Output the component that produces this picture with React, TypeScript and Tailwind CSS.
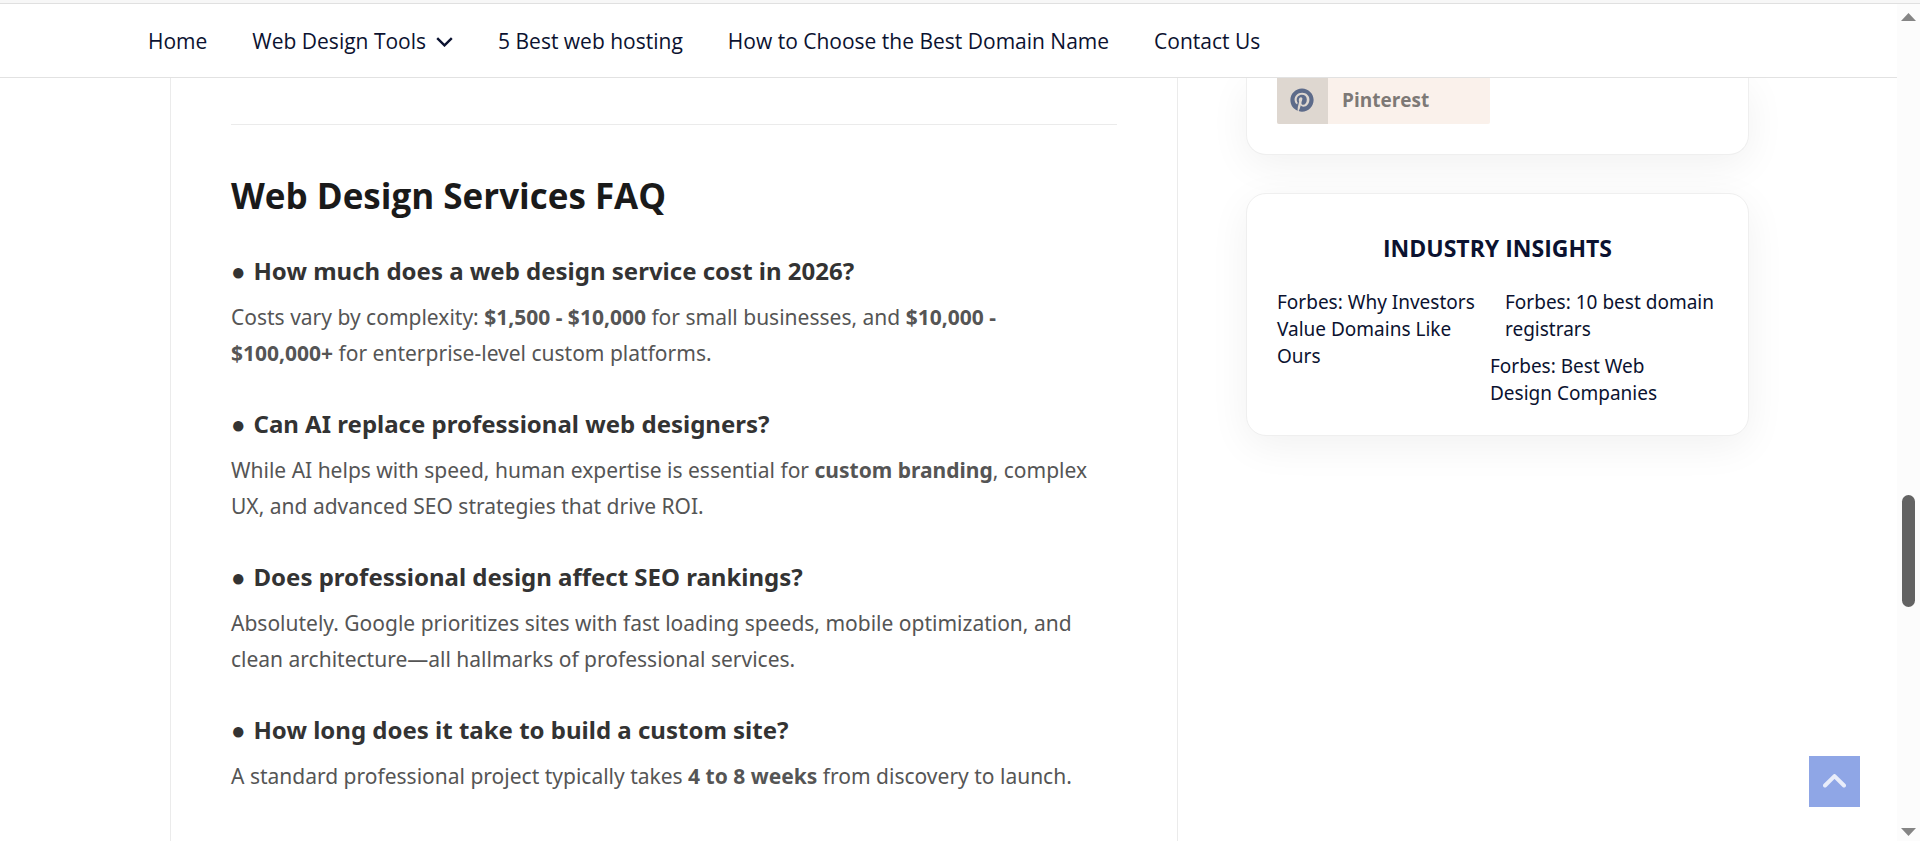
import React from 'react';
import { FaPinterest } from 'react-icons/fa';

interface FaqItem {
  question: string;
  answer: React.ReactNode;
}

const navLinks = [
  { label: 'Home' },
  { label: 'Web Design Tools', hasMenu: true },
  { label: '5 Best web hosting' },
  { label: 'How to Choose the Best Domain Name' },
  { label: 'Contact Us' },
];

const faqItems: FaqItem[] = [
  {
    question: 'How much does a web design service cost in 2026?',
    answer: (
      <>
        Costs vary by complexity: <strong>$1,500 - $10,000</strong> for small businesses, and{' '}
        <strong>
          $10,000 -<br />
          $100,000+
        </strong>{' '}
        for enterprise-level custom platforms.
      </>
    ),
  },
  {
    question: 'Can AI replace professional web designers?',
    answer: (
      <>
        While AI helps with speed, human expertise is essential for{' '}
        <strong>custom branding</strong>, complex
        <br />
        UX, and advanced SEO strategies that drive ROI.
      </>
    ),
  },
  {
    question: 'Does professional design affect SEO rankings?',
    answer: (
      <>
        Absolutely. Google prioritizes sites with fast loading speeds, mobile optimization, and
        <br />
        clean architecture—all hallmarks of professional services.
      </>
    ),
  },
  {
    question: 'How long does it take to build a custom site?',
    answer: (
      <>
        A standard professional project typically takes <strong>4 to 8 weeks</strong> from
        discovery to launch.
      </>
    ),
  },
];

function Header() {
  return (
    <header className="border-b border-[#e2e2e2] bg-white">
      <nav className="mx-auto flex h-[73px] max-w-[1601px] items-center gap-[45px] pt-[2px] text-[21px] text-[#0b1230]">
        {navLinks.map((link) => (
          <a key={link.label} href="#" className="flex items-center gap-[10px] whitespace-nowrap">
            {link.label}
            {link.hasMenu && (
              <svg width="17" height="10" viewBox="0 0 17 10" fill="none" aria-hidden="true">
                <path d="M1.2 1.2 8.5 8.4l7.3-7.2" stroke="currentColor" strokeWidth="2.4" />
              </svg>
            )}
          </a>
        ))}
      </nav>
    </header>
  );
}

function Faq() {
  return (
    <article className="ml-[22px] min-w-0 flex-1 border-x border-[#ebebeb] px-[60px] pt-[46px]">
      <hr className="border-[#ebebeb]" />
      <h2 className="mt-[46px] text-[35px] leading-[50px] font-bold text-[#1a1a1a]">
        Web Design Services FAQ
      </h2>
      <div className="mt-[32px] flex flex-col gap-[35px] font-['Noto_Sans',sans-serif]">
        {faqItems.map((item) => (
          <section key={item.question}>
            <h3 className="flex gap-[8px] text-[24px] leading-[36px] font-bold text-[#333333]">
              <span>●</span>
              {item.question}
            </h3>
            <p className="mt-[10px] text-[21px] leading-[36px] text-[#555555]">{item.answer}</p>
          </section>
        ))}
      </div>
    </article>
  );
}

function Sidebar() {
  return (
    <aside className="flex w-[503px] shrink-0 flex-col gap-[38px]">
      <div className="rounded-b-[20px] border border-t-0 border-[#efefef] bg-white px-[30px] pb-[30px] shadow-[0_10px_40px_rgba(0,0,0,0.06)]">
        <a href="#" className="flex h-[46px] w-[213px] items-stretch overflow-hidden rounded-b-[2px] bg-[#faf1eb]">
          <span className="flex w-[51px] items-center bg-[#ded7d0] pb-[2px] pl-[13px] text-[#5d6b8a]">
            <FaPinterest size={24} />
          </span>
          <span className="flex items-center pb-[2px] pl-[14px] text-[19px] font-bold text-[#7d7976]">
            Pinterest
          </span>
        </a>
      </div>

      <div className="rounded-[20px] border border-[#efefef] bg-white px-[30px] pt-[36px] pb-[28px] text-[#0b1230] shadow-[0_10px_40px_rgba(0,0,0,0.06)]">
        <h2 className="text-center text-[23px] leading-[36px] font-bold">INDUSTRY INSIGHTS</h2>
        <div className="mt-[23px] flex font-['Noto_Sans',sans-serif] text-[19px] leading-[27px]">
          <a href="#" className="w-[213px] shrink-0">
            Forbes: Why Investors Value Domains Like Ours
          </a>
          <div className="flex flex-col gap-[10px]">
            <a href="#" className="pl-[15px]">
              Forbes: 10 best domain registrars
            </a>
            <a href="#" className="w-[180px]">
              Forbes: Best Web Design Companies
            </a>
          </div>
        </div>
      </div>
    </aside>
  );
}

function ScrollTrack() {
  return (
    <div className="flex w-[23px] shrink-0 flex-col items-center bg-[#fcfcfc] pt-[9px] pb-[5px]" aria-hidden="true">
      <svg width="15" height="8" viewBox="0 0 15 8">
        <path d="M7.5 0 15 8H0z" fill="#858585" />
      </svg>
      <div className="grow-[474]" />
      <div className="h-[112px] w-[13px] rounded-full bg-[#636363]" />
      <div className="grow-[221]" />
      <svg width="15" height="8" viewBox="0 0 15 8">
        <path d="M0 0h15L7.5 8z" fill="#858585" />
      </svg>
    </div>
  );
}

export default function App() {
  return (
    <div className="flex min-h-screen flex-col bg-white font-['Open_Sans',sans-serif]">
      <div className="h-[4px] border-b border-[#e0e0e0] bg-[#f7f7f7]" />
      <div className="flex flex-1">
        <div className="flex min-w-0 flex-1 flex-col">
          <Header />
          <main className="flex flex-1 overflow-hidden">
            <div className="mx-auto flex w-full max-w-[1601px] gap-[68px]">
              <Faq />
              <Sidebar />
            </div>
          </main>
        </div>
        <ScrollTrack />
      </div>

      <button
        type="button"
        aria-label="Scroll to top"
        className="fixed right-[60px] bottom-[34px] flex size-[51px] items-center justify-center bg-[#8fa6e6]"
      >
        <svg width="23" height="15" viewBox="0 0 23 15" fill="none">
          <path
            d="m2 11.5 9.5-9.4 9.5 9.4"
            stroke="#e9edfa"
            strokeWidth="4"
            strokeLinecap="round"
            strokeLinejoin="round"
          />
        </svg>
      </button>
    </div>
  );
}
